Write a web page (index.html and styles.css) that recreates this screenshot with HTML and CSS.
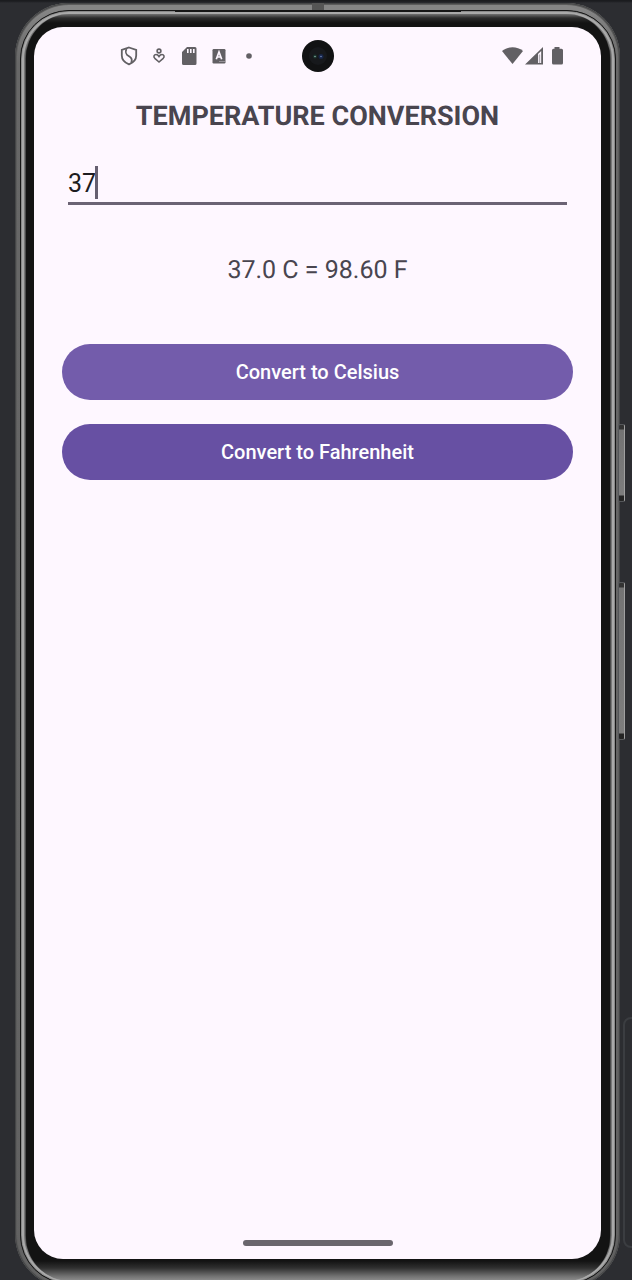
FILE: index.html
```html
<!DOCTYPE html>
<html lang="en">
<head>
<meta charset="utf-8">
<meta name="viewport" content="width=device-width, initial-scale=1">
<title>Temperature Conversion</title>
<link rel="stylesheet" href="styles.css">
</head>
<body>
<div class="stage">
  <div class="side-panel"></div>
  <div class="phone">
    <div class="antenna antenna-top"></div>
    <div class="bezel">
      <div class="speaker"></div>
      <div class="screen">
        <header class="status-bar">
          <div class="status-group">
            <svg class="status-icon" viewBox="0 0 20 20" fill="none" stroke="#626064" stroke-width="1.8" aria-hidden="true">
              <path d="M10 1.500 17.200 4v5.500c0 4-3 7.200-7.200 8.900-4.200-1.700-7.200-4.900-7.200-8.900V4z"/>
              <path d="M7.400 3C5.500 7.500 8 9 10 10.200c2.600 1.500 3.600 3.500 2.200 6.600"/>
            </svg>
            <svg class="status-icon" viewBox="0 0 20 20" fill="none" stroke="#626064" stroke-width="1.600" aria-hidden="true">
              <circle cx="10" cy="5" r="1.900"/>
              <path d="M10 16 5.800 12.300C4 10.500 5.200 8.500 7 8.500c1.500 0 2.400 1 3 2 .6-1 1.500-2 3-2 1.800 0 3 2 1.200 3.800z"/>
            </svg>
            <svg class="status-icon" viewBox="0 0 20 20" fill="#626064" aria-hidden="true">
              <path fill-rule="evenodd" d="M8 1h8a1.500 1.500 0 0 1 1.500 1.500v15A1.500 1.500 0 0 1 16 19H4.500A1.500 1.500 0 0 1 3 17.500V6zM8 3v4h1.600V3zm3 0v4h1.600V3zm3 0v4h1.600V3z"/>
            </svg>
            <svg class="status-icon" viewBox="0 0 20 20" aria-hidden="true">
              <rect x="3.500" y="3" width="13" height="14.500" rx="1.200" fill="#626064"/>
              <path d="M7.300 13.200 10 6l2.700 7.200M8.300 11h3.400" fill="none" stroke="#fef7ff" stroke-width="1.700"/>
              <path d="M10.500 15.500h5" stroke="#c9c4cb" stroke-width="1" stroke-dasharray="1 1"/>
            </svg>
            <svg class="status-icon" viewBox="0 0 20 20" aria-hidden="true"><circle cx="10" cy="10" r="2.800" fill="#626064"/></svg>
          </div>
          <div class="camera">
            <svg viewBox="0 0 32 32" aria-hidden="true">
              <circle cx="16" cy="16" r="16" fill="#111213"/>
              <circle cx="16" cy="16" r="9" fill="#17191c"/>
              <circle cx="13" cy="16.500" r="2" fill="#18322c"/>
              <circle cx="19" cy="16.500" r="2.500" fill="#172548"/>
              <circle cx="13" cy="16.500" r=".8" fill="#8ba79e"/>
              <circle cx="19" cy="16.500" r=".8" fill="#7187b8"/>
            </svg>
          </div>
          <svg class="system-icons" viewBox="0 0 64 20" fill="#626064" aria-hidden="true">
            <path d="M0 5C6 0 15 0 21 5L10.500 18z"/>
            <path fill-rule="evenodd" d="M41 1v17.500H23zM36 8v9h3.200V5z"/>
            <path d="M36.800 8.500h1.400V17h-1.400z" fill="#b5b0b7"/>
            <path d="M52.500 1h5v1.800h2A1.500 1.500 0 0 1 61 4.300v12.700a1.500 1.500 0 0 1-1.500 1.500h-8A1.500 1.500 0 0 1 50 17V4.300a1.500 1.500 0 0 1 1.500-1.500h1z"/>
          </svg>
        </header>
        <main class="content">
          <h1 class="title">TEMPERATURE CONVERSION</h1>
          <div class="field">
            <input class="temperature" type="text" inputmode="decimal" aria-label="Temperature" value="37">
            <span class="caret"></span>
          </div>
          <p class="result">37.0 C = 98.60 F</p>
          <div class="actions">
            <button class="convert convert-pressed" type="button">Convert to Celsius</button>
            <button class="convert" type="button">Convert to Fahrenheit</button>
          </div>
        </main>
        <div class="home-indicator"></div>
      </div>
    </div>
  </div>
  <div class="side-key side-key-power"></div>
  <div class="side-key side-key-volume"></div>
</div>
</body>
</html>
```
FILE: styles.css
```css
* {
  box-sizing: border-box;
}

body {
  margin: 0;
  background: #2c2d31;
  font-family: Roboto, "Liberation Sans", sans-serif;
  text-rendering: geometricPrecision;
}

.stage {
  position: relative;
  display: flex;
  height: 100vh;
  padding: 3px 12px 0 15px;
  overflow: hidden;
  background: linear-gradient(#1b1c1f 0, #1b1c1f 1px, #2c2d31 3px);
}

.phone {
  position: relative;
  flex: 1;
  display: flex;
  margin-bottom: -8px;
  padding: 7px 4px 4px 5px;
  border-radius: 54px;
  background: linear-gradient(#858585 0, #858585 7px, #686868 60px, #626262 100%);
  box-shadow: inset 0 0 0 1px #454647, inset 0 0 0 2px #5c5c5c;
}

.antenna-top {
  position: absolute;
  top: 0;
  left: 50%;
  width: 12px;
  height: 7px;
  margin-left: -6px;
  background: #555555;
}

.bezel {
  position: relative;
  flex: 1;
  display: flex;
  padding: 16px 14px 24px 13px;
  border: 1px solid #161616;
  border-radius: 49px;
  background: #131313;
  box-shadow:
    inset 0 0 0 1px #898989,
    inset 0 0 0 3px #a9a9a9,
    inset 0 0 0 4px #777777,
    inset 0 0 0 5px #4a4a4a;
}

.bezel::before {
  content: "";
  position: absolute;
  inset: 3px 5px 2px;
  border-radius: 44px;
  background: linear-gradient(#707070 0, #2b2b2b 4px, #131313 9px, #131313 calc(100% - 20px), #303030 calc(100% - 13px), #707070 calc(100% - 5px), #909090 100%);
}

.speaker {
  position: absolute;
  top: -1px;
  left: 26%;
  right: 26%;
  height: 2px;
  background: #161616;
}

.screen {
  position: relative;
  flex: 1;
  display: flex;
  flex-direction: column;
  min-width: 0;
  border-radius: 29px;
  background: #fef7ff;
}

.status-bar {
  position: relative;
  display: flex;
  align-items: center;
  justify-content: space-between;
  height: 58px;
  padding: 0 35px 0 85px;
}

.status-group {
  display: flex;
  gap: 10px;
}

.status-icon {
  width: 20px;
  height: 20px;
}

.system-icons {
  width: 64px;
  height: 20px;
}

.camera {
  position: absolute;
  top: 13px;
  left: 50%;
  width: 32px;
  height: 32px;
  margin-left: -16px;
}

.camera svg {
  display: block;
}

.content {
  flex: 1;
  padding: 15px 28px 0;
}

.title {
  margin: 0 0 32px;
  font-size: 27px;
  line-height: 32px;
  font-weight: 700;
  text-align: center;
  color: #49454f;
}

.field {
  position: relative;
  margin: 0 6px 50px;
}

.temperature {
  display: block;
  width: 100%;
  height: 41px;
  padding: 0;
  border: 0;
  border-bottom: 3px solid #6b6374;
  border-radius: 0;
  outline: 0;
  background: transparent;
  font-family: inherit;
  font-size: 25px;
  color: #1d1b20;
  caret-color: transparent;
}

.caret {
  position: absolute;
  top: 2px;
  left: 27px;
  width: 3px;
  height: 33px;
  background: #665f70;
}

.result {
  margin: 0 0 57px;
  font-size: 25px;
  line-height: 32px;
  text-align: center;
  color: #49454f;
}

.actions {
  display: grid;
  gap: 24px;
}

.convert {
  height: 56px;
  padding: 0 24px;
  border: 0;
  border-radius: 28px;
  background: #6750a3;
  font-family: inherit;
  font-size: 20px;
  font-weight: 500;
  color: #ffffff;
}

.convert-pressed {
  background: #735cab;
}

.home-indicator {
  align-self: center;
  width: 150px;
  height: 6px;
  margin-bottom: 13px;
  border-radius: 3px;
  background: #6a666d;
}

.side-key {
  position: absolute;
  right: 7px;
  width: 7px;
  border: 1px solid #55575a;
  border-right-color: #a0a0a0;
  border-radius: 2px;
  background: linear-gradient(#333333 4px, #747474 5px, #7d7d7d calc(100% - 6px), #242424 calc(100% - 5px));
}

.side-key-power {
  top: 424px;
  height: 78px;
}

.side-key-volume {
  top: 582px;
  height: 158px;
}

.side-panel {
  position: absolute;
  top: 1017px;
  right: -8px;
  width: 17px;
  height: 231px;
  border: 2px solid #3b3d41;
  border-radius: 8px;
}
```
